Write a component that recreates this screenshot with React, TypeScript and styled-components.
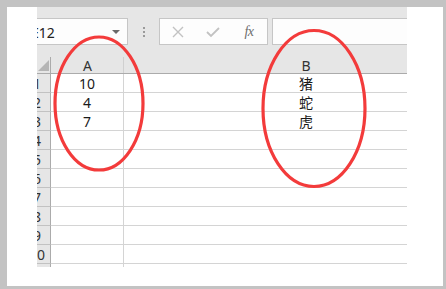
import React from "react";
import styled, { createGlobalStyle } from "styled-components";

const Global = createGlobalStyle`
  html, body { margin: 0; padding: 0; background: #c3c3c3; }
  body { font-family: "Noto Sans", "Noto Sans CJK SC", sans-serif; }
`;

const Frame = styled.div`
  position: relative;
  width: 446px;
  height: 289px;
  box-sizing: border-box;
  padding: 7px 3px 3px 7px;
  background: #c3c3c3;
`;

const Paper = styled.div`
  width: 100%;
  height: 100%;
  background: #ffffff;
  padding-left: 30px;
  box-sizing: border-box;
`;

const Panel = styled.div`
  width: 370px;
  height: 260px;
  overflow: hidden;
  background: #ffffff;
  display: flex;
  flex-direction: column;
`;

const Toolbar = styled.div`
  height: 48px;
  flex: none;
  background: #e6e6e6;
  box-sizing: border-box;
  padding-top: 11px;
  display: flex;
  align-items: flex-start;
`;

const Box = styled.div<{ $w: number; $ml?: number }>`
  width: ${(p) => p.$w}px;
  margin-left: ${(p) => p.$ml ?? 0}px;
  flex: none;
  height: 27px;
  box-sizing: border-box;
  background: #fdfdfd;
  border: 1px solid #c6c6c6;
  display: flex;
  align-items: center;
  position: relative;
`;

const NameText = styled.span`
  padding-left: 13px;
  padding-top: 1px;
  font-size: 14px;
  color: #222;
  flex: 1;
`;

const Caret = styled.span`
  width: 0;
  height: 0;
  border-left: 4px solid transparent;
  border-right: 4px solid transparent;
  border-top: 4px solid #6a6a6a;
  margin-right: 7px;
`;

const Dots = styled.div`
  width: 31px;
  height: 27px;
  flex: none;
  display: flex;
  flex-direction: column;
  align-items: center;
  justify-content: center;
  gap: 2px;
`;

const Dot = styled.span`
  width: 2px;
  height: 2px;
  background: #9a9a9a;
`;

const IconSlot = styled.span<{ $w: number }>`
  width: ${(p) => p.$w}px;
  flex: none;
  display: flex;
  justify-content: center;
  align-items: center;
`;

const Fx = styled.span`
  font-family: "Liberation Serif", serif;
  font-style: italic;
  font-size: 14px;
  color: #6e6e6e;
  letter-spacing: -0.5px;
`;

const Sheet = styled.div`
  margin-left: -13px;
  display: flex;
  flex-direction: column;
`;

const Row = styled.div`
  display: grid;
  grid-template-columns: 27px 73px 364px;
  height: 19px;
  flex: none;
`;

const HeaderCell = styled.div<{ $corner?: boolean }>`
  background: #e6e6e6;
  border-bottom: 1px solid #ababab;
  box-sizing: border-box;
  display: flex;
  align-items: center;
  justify-content: center;
  padding-top: 3px;
  font-size: 14px;
  line-height: 1;
  color: #333;
  position: relative;
  &::after {
    content: "";
    position: absolute;
    right: 0;
    top: 2px;
    bottom: 0;
    width: 1px;
    background: ${(p) => (p.$corner ? "#ababab" : "#d0d0d0")};
  }
`;

const Corner = styled.span`
  position: absolute;
  right: 2px;
  bottom: 2px;
  width: 0;
  height: 0;
  border-left: 11px solid transparent;
  border-bottom: 11px solid #b5b5b5;
`;

const RowHead = styled.div`
  background: #e6e6e6;
  border-right: 1px solid #ababab;
  border-bottom: 1px solid #c2c2c2;
  box-sizing: border-box;
  display: flex;
  align-items: center;
  justify-content: center;
  padding-top: 2px;
  font-size: 14px;
  color: #333;
  line-height: 1;
`;

const Cell = styled.div<{ $last?: boolean }>`
  border-bottom: 1px solid #d4d4d4;
  border-right: ${(p) => (p.$last ? "none" : "1px solid #d4d4d4")};
  box-sizing: border-box;
  display: flex;
  align-items: center;
  justify-content: center;
  padding-top: 2px;
  font-size: 14px;
  color: #1a1a1a;
  line-height: 1;
`;

const Overlay = styled.svg`
  position: absolute;
  left: 0;
  top: 0;
  pointer-events: none;
`;

const data: [string, string][] = [
  ["10", "猪"],
  ["4", "蛇"],
  ["7", "虎"],
];

export default function App() {
  const rows = Array.from({ length: 11 }, (_, i) => i);
  return (
    <>
      <Global />
      <Frame>
        <Paper>
          <Panel>
            <Toolbar>
              <Box $w={111} $ml={-20}>
                <NameText>E12</NameText>
                <Caret />
              </Box>
              <Dots>
                <Dot />
                <Dot />
                <Dot />
              </Dots>
              <Box $w={109}>
                <IconSlot $w={36}>
                  <svg width="12" height="12" viewBox="0 0 12 12">
                    <path d="M1 1 L11 11 M11 1 L1 11" stroke="#c2c2c2" strokeWidth="1.4" />
                  </svg>
                </IconSlot>
                <IconSlot $w={34}>
                  <svg width="14" height="12" viewBox="0 0 14 12">
                    <path d="M1 6 L5 10 L13 2" stroke="#c2c2c2" strokeWidth="1.8" fill="none" />
                  </svg>
                </IconSlot>
                <IconSlot $w={38}>
                  <Fx>fx</Fx>
                </IconSlot>
              </Box>
              <Box $w={200} $ml={4} />
            </Toolbar>
            <Sheet>
              <Row>
                <HeaderCell $corner>
                  <Corner />
                </HeaderCell>
                <HeaderCell>A</HeaderCell>
                <HeaderCell>B</HeaderCell>
              </Row>
              {rows.map((i) => (
                <Row key={i}>
                  <RowHead>{i + 1}</RowHead>
                  <Cell>{data[i]?.[0] ?? ""}</Cell>
                  <Cell $last>{data[i]?.[1] ?? ""}</Cell>
                </Row>
              ))}
            </Sheet>
          </Panel>
        </Paper>
        <Overlay width="446" height="289" viewBox="0 0 446 289">
          <ellipse cx="99" cy="103.5" rx="44" ry="66.5" fill="none" stroke="#f33b3b" strokeWidth="3.2" />
          <ellipse cx="314" cy="108.5" rx="51" ry="78" fill="none" stroke="#f33b3b" strokeWidth="3.2" />
        </Overlay>
      </Frame>
    </>
  );
}
